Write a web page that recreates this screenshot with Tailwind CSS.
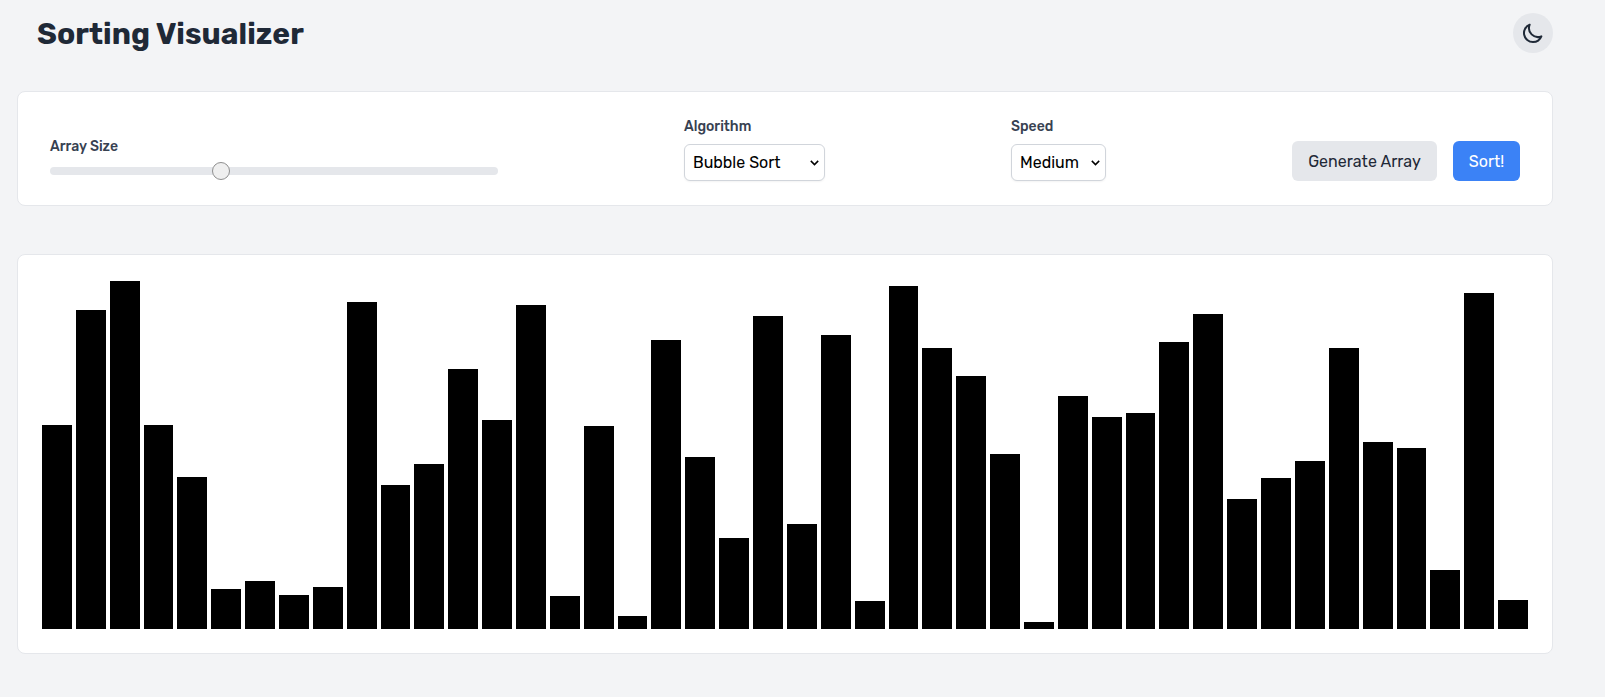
<!DOCTYPE html>
<html lang="en">
<head>
<meta charset="utf-8">
<title>Sorting Visualizer</title>
<script src="https://cdn.jsdelivr.net/npm/@tailwindcss/browser@4"></script>
</head>
<body class="h-screen overflow-hidden bg-[#f3f4f6] font-[Rubik,Roboto,sans-serif] text-[#1f2937]">
<main class="ml-[17px] w-[1536px]">
  <header class="flex h-[66px] items-center justify-between pl-5">
    <h1 class="pt-[2px] text-3xl font-bold tracking-[0.05px] whitespace-nowrap">Sorting Visualizer</h1>
    <button class="flex size-10 items-center justify-center rounded-full bg-[#e5e7eb]" aria-label="Toggle theme">
      <svg class="size-6" viewBox="0 0 24 24" fill="none" stroke="currentColor" stroke-width="2" stroke-linecap="round" stroke-linejoin="round"><path d="M20.354 15.354A9 9 0 018.646 3.646 9.003 9.003 0 0012 21a9.003 9.003 0 008.354-5.646z"/></svg>
    </button>
  </header>

  <section class="mt-[25px] flex h-[115px] items-end justify-between rounded-lg border border-[#e5e7eb] bg-white px-8 pb-6">
    <div class="w-[448px] pb-[6px]">
      <div class="text-sm leading-5 font-medium whitespace-nowrap text-[#374151]">Array Size</div>
      <div class="relative mt-[10px] h-2 rounded-lg bg-[#e5e7eb]">
        <div class="absolute -top-[5px] left-[162px] size-[18px] rounded-full border border-[#8f8f8f] bg-[#efefef]"></div>
      </div>
    </div>
    <div>
      <div class="mb-[7px] text-sm leading-5 font-medium whitespace-nowrap text-[#374151]">Algorithm</div>
      <div class="flex h-[37px] w-[141px] items-center justify-between rounded-md border border-[#d1d5db] bg-white pr-[5px] pl-2 text-base whitespace-nowrap text-black shadow-xs">
        <span>Bubble Sort</span>
        <svg class="h-[6px] w-[9px]" viewBox="0 0 9 6" fill="none" stroke="currentColor" stroke-width="1.5"><path d="M.8.9 4.5 4.6 8.2.9"/></svg>
      </div>
    </div>
    <div>
      <div class="mb-[7px] text-sm leading-5 font-medium whitespace-nowrap text-[#374151]">Speed</div>
      <div class="flex h-[37px] w-[95px] items-center justify-between rounded-md border border-[#d1d5db] bg-white pr-[5px] pl-2 text-base whitespace-nowrap text-black shadow-xs">
        <span>Medium</span>
        <svg class="h-[6px] w-[9px]" viewBox="0 0 9 6" fill="none" stroke="currentColor" stroke-width="1.5"><path d="M.8.9 4.5 4.6 8.2.9"/></svg>
      </div>
    </div>
    <div class="flex gap-4">
      <button class="h-10 w-[145px] rounded-md bg-[#e5e7eb] pt-[2px] text-base tracking-[0.04px] whitespace-nowrap">Generate Array</button>
      <button class="h-10 w-[67px] rounded-md bg-[#3b82f6] pt-[2px] text-base whitespace-nowrap text-white">Sort!</button>
    </div>
  </section>

  <section id="chart" class="mt-12 flex h-[400px] items-end rounded-lg border border-[#e5e7eb] bg-white p-6"></section>
</main>
<script>
  const values = [204,319,348,204,152,40,48,34,42,327,144,165,260,209,324,33,203,13,289,172,91,313,105,294,28,343,281,253,175,7,233,212,216,287,315,130,151,168,281,187,181,59,336,29];
  const chart = document.getElementById('chart');
  const pitch = 33.8641;
  const barWidth = 29.8636;
  const origin = -0.06;
  let edge = 0;
  values.forEach((v, i) => {
    // Snap both edges to whole pixels so every bar stays crisp.
    const left = Math.round(origin + i * pitch);
    const right = Math.round(origin + i * pitch + barWidth);
    const bar = document.createElement('div');
    bar.className = 'shrink-0 bg-black';
    bar.style.marginLeft = left - edge + 'px';
    bar.style.width = right - left + 'px';
    bar.style.height = v + 'px';
    edge = right;
    chart.appendChild(bar);
  });
</script>
</body>
</html>
